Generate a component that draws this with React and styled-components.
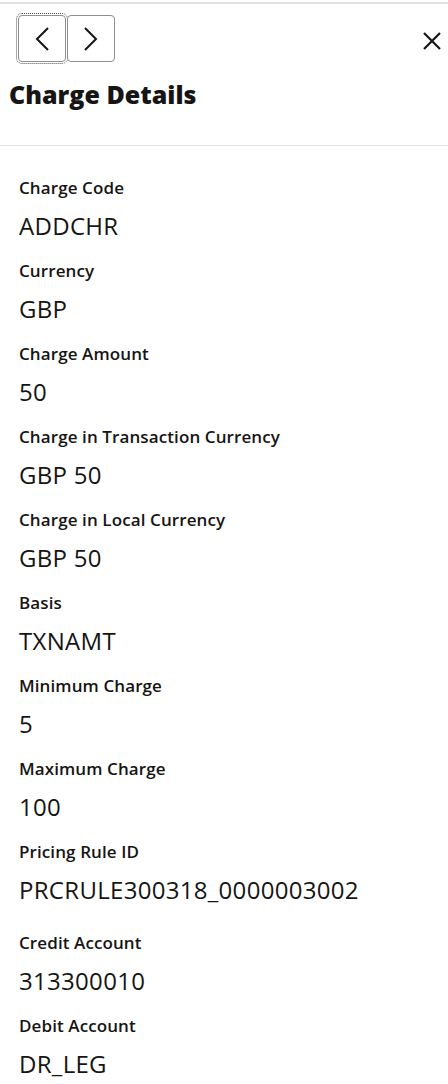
import styled, { createGlobalStyle } from "styled-components";

const GlobalStyle = createGlobalStyle`
    body {
        margin: 0;
        background: #fff;
        font-family: "Open Sans", "Noto Sans", sans-serif;
        color: #161513;
    }
`;

const Panel = styled.div`
    margin-top: 2px;
    border-top: 2px solid #e0e0e0;
    width: 448px;
`;

const Toolbar = styled.div`
    display: flex;
    align-items: flex-start;
    justify-content: space-between;
    padding: 11px 6px 0 18px;
`;

const NavGroup = styled.div`
    display: flex;
    gap: 1px;
`;

const NavButton = styled.button`
    width: 48px;
    height: 47px;
    display: flex;
    align-items: center;
    justify-content: center;
    background: #fff;
    border: 1px solid #8f8f8f;
    border-radius: 4px;
    padding: 0;
    outline: ${(p) => (p.$focused ? "1px dotted #555" : "none")};
    outline-offset: 1px;
`;

const CloseButton = styled.button`
    width: 20px;
    height: 20px;
    margin-top: 16px;
    display: flex;
    align-items: center;
    justify-content: center;
    background: none;
    border: none;
    padding: 0;
`;

const Title = styled.h1`
    margin: 16px 0 0 9px;
    font-size: 25px;
    line-height: 32px;
    font-weight: 800;
`;

const Divider = styled.div`
    margin-top: 35px;
    border-top: 1px solid #e5e5e5;
`;

const FieldList = styled.div`
    padding: 32px 19px 0;
    display: flex;
    flex-direction: column;
`;

const Field = styled.div`
    padding-bottom: ${(p) => (p.$tall ? 28 : 20)}px;
`;

const Label = styled.div`
    font-size: 17px;
    line-height: 20px;
    font-weight: 600;
    letter-spacing: 0.1px;
`;

const Value = styled.div`
    margin-top: 13px;
    font-size: 24px;
    line-height: 30px;
    font-weight: 400;
    letter-spacing: 0.3px;
`;

const Chevron = ({ dir }) => (
    <svg width="16" height="24" viewBox="0 0 16 24" fill="none">
        <path
            d={dir === "left" ? "M14 1 L3 12 L14 23" : "M2 1 L13 12 L2 23"}
            stroke="#161513"
            strokeWidth="2"
        />
    </svg>
);

const fields = [
    { label: "Charge Code", value: "ADDCHR" },
    { label: "Currency", value: "GBP" },
    { label: "Charge Amount", value: "50" },
    { label: "Charge in Transaction Currency", value: "GBP 50" },
    { label: "Charge in Local Currency", value: "GBP 50" },
    { label: "Basis", value: "TXNAMT" },
    { label: "Minimum Charge", value: "5" },
    { label: "Maximum Charge", value: "100" },
    { label: "Pricing Rule ID", value: "PRCRULE300318_0000003002", tall: true },
    { label: "Credit Account", value: "313300010" },
    { label: "Debit Account", value: "DR_LEG" },
];

const App = () => {
    return (
        <Panel>
            <GlobalStyle />
            <Toolbar>
                <NavGroup>
                    <NavButton $focused>
                        <Chevron dir="left" />
                    </NavButton>
                    <NavButton>
                        <Chevron dir="right" />
                    </NavButton>
                </NavGroup>
                <CloseButton>
                    <svg width="18" height="18" viewBox="0 0 18 18">
                        <path d="M1 1 L17 17 M17 1 L1 17" stroke="#161513" strokeWidth="2.2" />
                    </svg>
                </CloseButton>
            </Toolbar>
            <Title>Charge Details</Title>
            <Divider />
            <FieldList>
                {fields.map((f) => (
                    <Field key={f.label} $tall={f.tall}>
                        <Label>{f.label}</Label>
                        <Value>{f.value}</Value>
                    </Field>
                ))}
            </FieldList>
        </Panel>
    );
};

export default App;
